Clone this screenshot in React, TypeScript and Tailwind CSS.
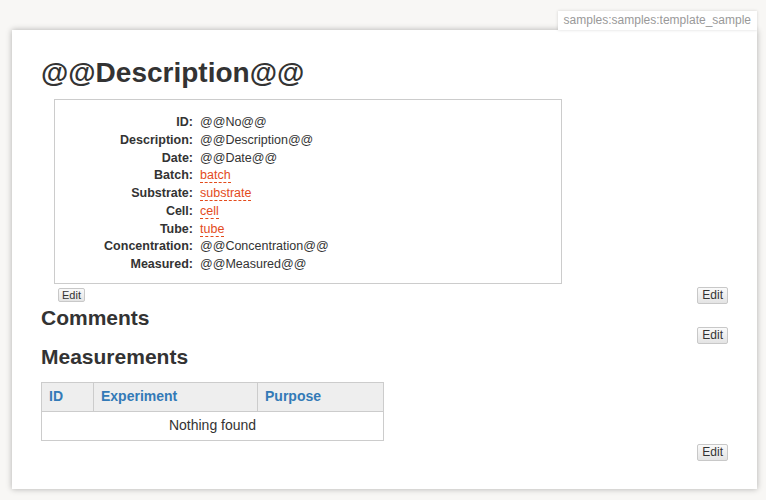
import React from "react";

type Row = { label: string; value: string; link?: boolean };

const rows: Row[] = [
	{ label: "ID", value: "@@No@@" },
	{ label: "Description", value: "@@Description@@" },
	{ label: "Date", value: "@@Date@@" },
	{ label: "Batch", value: "batch", link: true },
	{ label: "Substrate", value: "substrate", link: true },
	{ label: "Cell", value: "cell", link: true },
	{ label: "Tube", value: "tube", link: true },
	{ label: "Concentration", value: "@@Concentration@@" },
	{ label: "Measured", value: "@@Measured@@" },
];

function EditButton({ small }: { small?: boolean }) {
	return (
		<button
			className={
				small
					? "block border border-[#c8c8c8] rounded-[2px] bg-gradient-to-b from-[#fafafa] to-[#e4e4e4] text-[11px] leading-[12px] px-[3px] text-[#333]"
					: "block border border-[#c8c8c8] rounded-[2px] bg-gradient-to-b from-[#fafafa] to-[#e4e4e4] text-[12px] leading-[15px] px-[4px] text-[#333]"
			}
		>
			Edit
		</button>
	);
}

export default function App() {
	return (
		<div className="min-h-screen bg-[#f8f7f5] pt-[11px] pl-[12px] pr-[9px] font-['Liberation_Sans',Arial,sans-serif] text-[#333]">
			<div className="flex justify-end">
				<div className="bg-white h-[19px] px-[6px] text-[12px] leading-[19px] text-[#999] shadow-[0_0_3px_rgba(0,0,0,0.15)]">
					samples:samples:template_sample
				</div>
			</div>

			<div className="bg-white h-[459px] pl-[29px] pr-[29px] shadow-[0_0_6px_rgba(0,0,0,0.3)]">
				<h1 className="pt-[27px] text-[28px] leading-[31px] font-bold">@@Description@@</h1>

				<div className="mt-[11px] ml-[13px] w-[508px] border border-[#cccccc] pt-[14px] pb-[9px]">
					<div className="grid grid-cols-[138px_1fr] gap-x-[7px] text-[12.5px] leading-[17.75px]">
						{rows.map((r) => (
							<React.Fragment key={r.label}>
								<div className="text-right font-bold">{r.label}:</div>
								<div>
									{r.link ? (
										<span className="text-[#e34b1c] border-b border-dashed border-[#e34b1c]">
											{r.value}
										</span>
									) : (
										r.value
									)}
								</div>
							</React.Fragment>
						))}
					</div>
				</div>

				<div className="mt-[3px] flex justify-between items-start">
					<div className="ml-[17px] mt-[1px] flex">
						<EditButton small />
					</div>
					<EditButton />
				</div>

				<h3 className="mt-[5px] text-[21px] leading-[18px] font-bold">Comments</h3>
				<div className="flex justify-end">
					<EditButton />
				</div>

				<h3 className="mt-[4px] text-[21px] leading-[18px] font-bold">Measurements</h3>

				<table className="mt-[16px] w-[343px] border-collapse text-[14px]">
					<thead>
						<tr className="bg-[#eeeeee] text-[#337ab7] font-bold text-left">
							<th className="w-[52px] border border-[#cccccc] px-[7px] h-[29px]">ID</th>
							<th className="w-[164px] border border-[#cccccc] px-[7px]">Experiment</th>
							<th className="border border-[#cccccc] px-[7px]">Purpose</th>
						</tr>
					</thead>
					<tbody>
						<tr>
							<td colSpan={3} className="border border-[#cccccc] text-center h-[29px]">
								Nothing found
							</td>
						</tr>
					</tbody>
				</table>

				<div className="mt-[3px] flex justify-end">
					<EditButton />
				</div>
			</div>
		</div>
	);
}
